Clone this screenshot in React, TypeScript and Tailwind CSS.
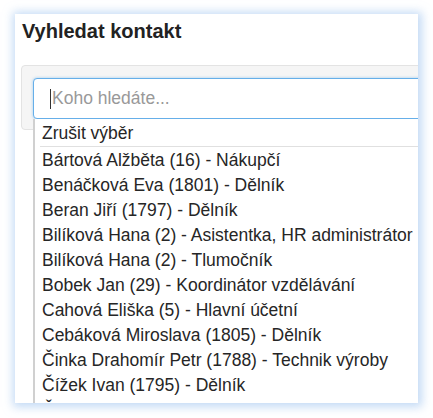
const contacts = [
  "Bártová Alžběta (16) - Nákupčí",
  "Benáčková Eva (1801) - Dělník",
  "Beran Jiří (1797) - Dělník",
  "Bilíková Hana (2) - Asistentka, HR administrátor",
  "Bilíková Hana (2) - Tlumočník",
  "Bobek Jan (29) - Koordinátor vzdělávání",
  "Cahová Eliška (5) - Hlavní účetní",
  "Cebáková Miroslava (1805) - Dělník",
  "Činka Drahomír Petr (1788) - Technik výroby",
  "Čížek Ivan (1795) - Dělník",
  "Čermák Petr (1790) - Dělník",
];

export default function App() {
  return (
    <div className="min-h-screen bg-white pt-[14px] pl-[15px] font-['Liberation_Sans',Arial,sans-serif] text-[#262626]">
      <div className="w-[403px] h-[389px] overflow-hidden bg-white shadow-[1px_1px_9px_3px_rgba(145,188,236,0.55)]">
        <h1 className="pl-[7px] pt-[5px] text-[20px] leading-[24px] font-bold text-[#222]">Vyhledat kontakt</h1>

        <div className="relative mt-[22px] ml-[6px] w-[430px] h-[65px] rounded border border-[#e3e3e3] bg-[#f5f5f5] pt-[12px] pl-[11px]">
          <div className="flex items-center h-[41px] w-[400px] rounded border border-[#66afe9] bg-white pl-[16px] shadow-[0_0_3px_rgba(102,175,233,0.6)]">
            <span className="w-px h-[20px] bg-[#333]" />
            <span className="ml-[1px] text-[17.5px] text-[#999]">Koho hledáte...</span>
          </div>

          <div className="absolute left-[11px] top-[53px] z-10 w-[400px] border-l-2 border-[#d0d0d0] bg-white pt-[2px]">
            <div className="h-[25px] pl-[7px] text-[17.5px] leading-[25px] whitespace-nowrap">Zrušit výběr</div>
            <div className="ml-[5px] mb-[1px] h-px bg-[#e0e0e0]" />
            {contacts.map((c, i) => (
              <div key={i} className="h-[25px] pl-[7px] text-[17.5px] leading-[25px] whitespace-nowrap">
                {c}
              </div>
            ))}
          </div>
        </div>
      </div>
    </div>
  );
}
